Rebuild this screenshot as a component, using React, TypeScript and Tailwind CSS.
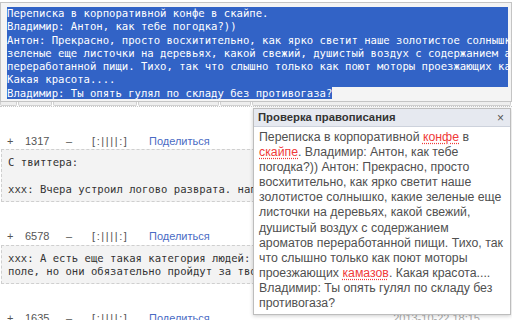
import React from 'react';

const mono = { fontFamily: '"DejaVu Sans Mono", monospace' };
const sans = { fontFamily: '"Liberation Sans", Arial, sans-serif' };

const selected = [
  'Переписка в корпоративной конфе в скайпе.',
  'Владимир: Антон, как тебе погодка?))',
  'Антон: Прекрасно, просто восхитительно, как ярко светит наше золотистое солнышко, какие',
  'зеленые еще листочки на деревьях, какой свежий, душистый воздух с содержанием ароматов',
  'переработанной пищи. Тихо, так что слышно только как поют моторы проезжающих камазов.',
  'Какая красота....',
];

interface Quote {
  id: string;
  rating: string;
  lines: string[];
}

const quotes: Quote[] = [
  { id: '1', rating: '1317', lines: ['С твиттера:', '\u00a0', 'xxx: Вчера устроил логово разврата. наприглашал друзей'] },
  { id: '2', rating: '6578', lines: ['xxx: А есть еще такая категория людей: они молча стоят', 'поле, но они обязательно пройдут за твоей спиной'] },
  { id: '3', rating: '1635', lines: [] },
];

const Typo: React.FC<{ children: React.ReactNode }> = ({ children }) => (
  <span className="text-[#f03a3a] underline decoration-dotted decoration-[#f03a3a] underline-offset-2">{children}</span>
);

// popup text, broken the way the reference wraps it
const spellLines: React.ReactNode[] = [
  <>Переписка в корпоративной <Typo>конфе</Typo> в</>,
  <><Typo>скайпе</Typo>. Владимир: Антон, как тебе</>,
  'погодка?)) Антон: Прекрасно, просто',
  'восхитительно, как ярко светит наше',
  'золотистое солнышко, какие зеленые еще',
  'листочки на деревьях, какой свежий,',
  'душистый воздух с содержанием',
  'ароматов переработанной пищи. Тихо, так',
  'что слышно только как поют моторы',
  <>проезжающих <Typo>камазов</Typo>. Какая красота....</>,
  'Владимир: Ты опять гулял по складу без',
  'противогаза?',
];

const VoteRow: React.FC<{ rating: string }> = ({ rating }) => (
  <div className="flex items-center h-[14px] text-[11px] text-[#555] whitespace-nowrap" style={sans}>
    <span className="w-[25px] pl-[7px]">+</span>
    <span className="w-[41px]">{rating}</span>
    <span className="w-[26px]">–</span>
    <span className="w-[57px] tracking-[1.6px]">[:||||:]</span>
    <span className="text-[#4a6bc4]">Поделиться</span>
    <span className="ml-auto mr-[32px] text-[#aaa]">2013-10-22 18:15</span>
  </div>
);

export default function App() {
  return (
    <div className="relative w-[512px] h-[320px] overflow-hidden bg-white">
      {/* textarea with selected text */}
      <div className="mt-[2px] border border-[#c4c4c4] bg-[#f4f4f4] pt-[4px] pb-[1px] pl-[6px] pr-[3px] text-[10.6px] leading-[13.3px] text-white whitespace-pre overflow-hidden" style={mono}>
        {selected.map((l) => (
          <div key={l} className="bg-[#3263c6]">{l}</div>
        ))}
        <div>
          <span className="bg-[#3263c6]">Владимир: Ты опять гулял по складу без противогаза?</span>
        </div>
      </div>

      {/* toolbar strip */}
      <div className="flex h-[5px] border-b border-dotted border-[#c8c8c8]">
        {[17, 35, 85, 82, 31, 262].map((w, i) => (
          <div key={i} className="h-full border-x border-b border-[#d0d0d0] bg-[#eeeeee] mr-px rounded-b-[2px]" style={{ width: w }} />
        ))}
      </div>

      {/* quotes */}
      <div className="pt-[27px]">
        {quotes.map((q) => (
          <div key={q.id} className="mb-[28px]">
            <VoteRow rating={q.rating} />
            {q.lines.length > 0 && (
              <div className="mt-[1px] ml-[1px] mr-[6px] border border-dashed border-[#cfcfcf] bg-[#f3f3f3] pt-[6px] pb-[4px] pl-[6px] text-[10.6px] leading-[13.5px] text-[#333] whitespace-pre overflow-hidden" style={mono}>
                {q.lines.map((l, i) => (
                  <div key={i}>{l}</div>
                ))}
              </div>
            )}
          </div>
        ))}
      </div>

      {/* spell check popup */}
      <div className="absolute left-[253px] top-[108px] w-[258px] h-[207px] border border-[#bdbdbd] bg-white shadow-[0_1px_4px_rgba(0,0,0,0.2)]" style={sans}>
        <div className="flex items-center justify-between h-[18px] bg-[#e6e9f0] border-b border-[#cdd2dc] pl-[4px] pr-[6px]">
          <span className="text-[11.3px] font-bold text-[#333]">Проверка правописания</span>
          <span className="text-[12px] text-[#555]">×</span>
        </div>
        <div className="pt-[3px] pl-[5px] text-[12.3px] leading-[15.1px] text-[#505050] whitespace-nowrap">
          {spellLines.map((l, i) => (
            <div key={i}>{l}</div>
          ))}
        </div>
      </div>
    </div>
  );
}
